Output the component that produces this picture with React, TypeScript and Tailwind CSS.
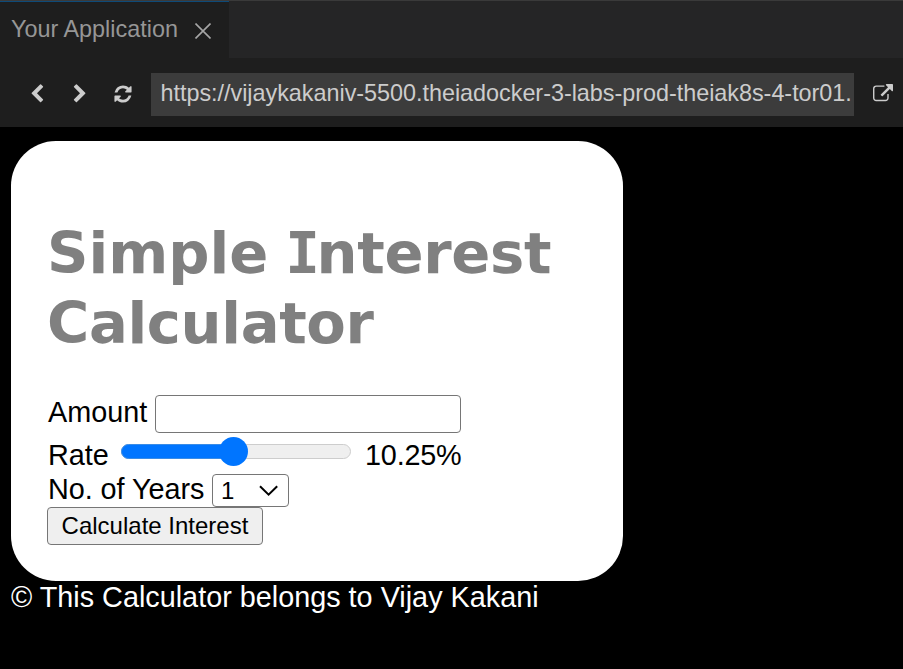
import React from "react";

function Icon({ d, className }: { d: string; className: string }) {
  return (
    <svg viewBox="0 0 1792 1792" className={className} fill="#cccccc" aria-hidden="true">
      <path d={d} />
    </svg>
  );
}

const CHEVRON_LEFT =
  "M1427 301l-531 531 531 531q19 19 19 45t-19 45l-166 166q-19 19-45 19t-45-19l-742-742q-19-19-19-45t19-45l742-742q19-19 45-19t45 19l166 166q19 19 19 45t-19 45z";
const CHEVRON_RIGHT =
  "M1363 877l-742 742q-19 19-45 19t-45-19l-166-166q-19-19-19-45t19-45l531-531-531-531q-19-19-19-45t19-45l166-166q19-19 45-19t45 19l742 742q19 19 19 45t-19 45z";
const REFRESH =
  "M1639 1056q0 5-1 7-64 268-268 434.5t-478 166.5q-146 0-282.5-55t-243.5-157l-129 129q-19 19-45 19t-45-19-19-45v-448q0-26 19-45t45-19h448q26 0 45 19t19 45-19 45l-137 137q71 66 161 102t187 36q134 0 250-65t186-179q11-17 53-117 8-23 30-23h192q13 0 22.5 9.5t9.5 22.5zm25-800v448q0 26-19 45t-45 19h-448q-26 0-45-19t-19-45 19-45l138-138q-148-137-349-137-134 0-250 65t-186 179q-11 17-53 117-8 23-30 23h-199q-13 0-22.5-9.5t-9.5-22.5v-7q65-268 270-434.5t480-166.5q146 0 284 55.5t245 156.5l130-129q19-19 45-19t45 19 19 45z";
const EXTERNAL_LINK =
  "M1408 928v320q0 119-84.5 203.5t-203.5 84.5h-832q-119 0-203.5-84.5t-84.5-203.5v-832q0-119 84.5-203.5t203.5-84.5h704q14 0 23 9t9 23v64q0 14-9 23t-23 9h-704q-66 0-113 47t-47 113v832q0 66 47 113t113 47h832q66 0 113-47t47-113v-320q0-14 9-23t23-9h64q14 0 23 9t9 23zm384-864v512q0 26-19 45t-45 19-45-19l-176-176-652 652q-10 10-23 10t-23-10l-114-114q-10-10-10-23t10-23l652-652-176-176q-19-19-19-45t19-45 45-19h512q26 0 45 19t19 45z";

function TabBar() {
  return (
    <div className="flex h-[58px] border-t border-[#3a3a3a] bg-[#252526]">
      <div className="flex w-[229px] border-t border-[#0e4a78] bg-[#1e1e1e] pl-[11px]">
        <span className="w-[184px] whitespace-nowrap pt-[11px] text-[23.4px] leading-8 text-[#969696]">
          Your Application
        </span>
        <svg viewBox="0 0 16 16" className="mt-[21px] h-4 w-4" stroke="#a6a6a6" strokeWidth="1.6" fill="none">
          <path d="M0.5 0.5L15.5 15.5M15.5 0.5L0.5 15.5" />
        </svg>
      </div>
    </div>
  );
}

function Toolbar() {
  return (
    <div className="flex h-[69px] bg-[#1e1e1e] pt-[15px]">
      <div className="flex w-[151px] pl-[27px] pt-[11px]">
        <Icon d={CHEVRON_LEFT} className="h-5 w-5" />
        <Icon d={CHEVRON_RIGHT} className="ml-[23px] h-5 w-5" />
        <Icon d={REFRESH} className="ml-[23px] h-5 w-5" />
      </div>
      <div className="h-[43px] w-[703px] overflow-hidden whitespace-nowrap bg-[#3c3c3c] pl-[9.5px] pt-1 text-[23.4px] leading-8 tracking-[-0.025px] text-[#cccccc]">
        https://vijaykakaniv-5500.theiadocker-3-labs-prod-theiak8s-4-tor01.
      </div>
      <Icon d={EXTERNAL_LINK} className="ml-[19px] mt-[11px] h-5 w-5" />
    </div>
  );
}

export default function App() {
  return (
    <div className="h-[669px] w-[903px] overflow-hidden bg-black font-['Liberation_Sans',Arial,sans-serif]">
      <TabBar />
      <Toolbar />
      <main className="pl-[11px] pt-[14px]">
        <div className="h-[440px] w-[612px] rounded-[45px] bg-white pl-[36px] pt-[78px] text-[28.8px] text-black">
          <h1 className="font-['DejaVu_Sans',Verdana,sans-serif] text-[57.6px] font-bold leading-[70px] text-[#808080]">
            <span className="block whitespace-nowrap">
              Simple{" "}
              <span className="ml-[-3px] font-['DejaVu_Sans_Mono',monospace] tracking-[-3.5px]">I</span>
              <span className="tracking-[-0.3px]">nterest</span>
            </span>
            <span className="block whitespace-nowrap tracking-[-0.35px]">Calculator</span>
          </h1>
          <div className="mt-[36px] flex h-[38px]">
            <label className="w-[108px] pl-px leading-[35px]">Amount</label>
            <input className="h-[38px] w-[306px] rounded-[4px] border border-[#767676] bg-white" />
          </div>
          <div className="flex h-[41px]">
            <span className="w-[74px] pl-px pt-[4px] leading-[36px]">Rate</span>
            <div className="relative mt-[11px] h-[15px] w-[230px] rounded-full border border-[#cdcdcd] bg-[#efefef]">
              <div className="-ml-px -mt-px h-[15px] w-[113px] rounded-l-full border border-[#3a8ce6] bg-[#0075ff]" />
              <div className="absolute -top-[8px] left-[97px] h-[29px] w-[29px] rounded-full bg-[#0075ff]" />
            </div>
            <span className="pl-[14px] pt-[4px] leading-[36px] tracking-[-0.2px]">10.25%</span>
          </div>
          <div className="flex h-[33px]">
            <span className="w-[165px] whitespace-nowrap pl-px leading-[31px] tracking-[-0.05px]">No. of Years</span>
            <div className="flex h-[33px] w-[77px] rounded-[4px] border border-[#767676] bg-white pl-[8px] text-[24px] leading-[32px]">
              <span className="w-[38px]">1</span>
              <svg viewBox="0 0 20 12" className="mt-[10px] h-3 w-5" fill="none" stroke="#000" strokeWidth="2">
                <path d="M1 1.2L9.6 9.6L18.2 1.2" />
              </svg>
            </div>
          </div>
          <button className="block h-[38px] w-[216px] whitespace-nowrap rounded-[4px] border border-[#767676] bg-[#efefef] pb-px text-[24px] leading-[35px]">
            Calculate Interest
          </button>
        </div>
        <footer className="whitespace-nowrap text-[28.8px] leading-[33px] text-white">
          © This Calculator belongs to Vijay Kakani
        </footer>
      </main>
    </div>
  );
}
